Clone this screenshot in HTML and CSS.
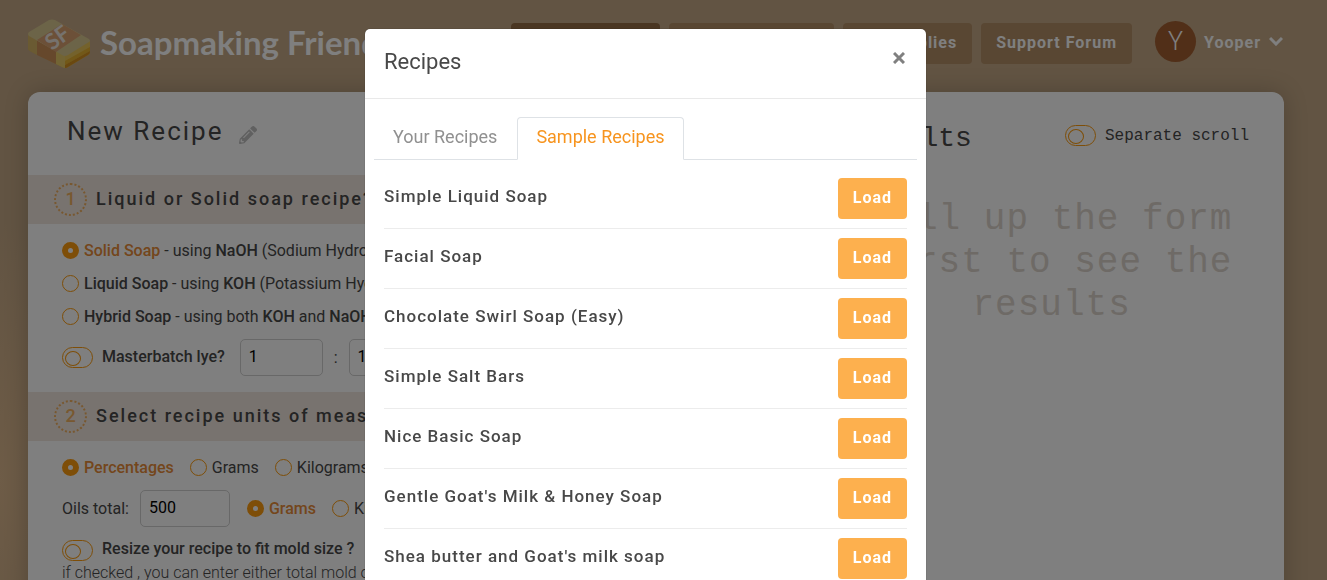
FILE: index.html
```html
<!DOCTYPE html>
<html lang="en">
<head>
    <meta charset="UTF-8">
    <meta name="viewport" content="width=device-width, initial-scale=1.0">
    <title>Soapmaking Friend</title>
    <link rel="stylesheet" href="styles.css">
</head>
<body>
    <header class="site-header">
        <a class="logo" href="#">
            <svg class="logo-icon" width="62" height="50" viewBox="0 0 62 50" aria-hidden="true">
                <path d="M0 14v15q0 2 2 3l32 16q3 2 6 0l20-12q2-1 2-3V22L24 8z" fill="#d8b458"/>
                <path d="M0 14v15q0 2 2 3l7 4V20z" fill="#d4b464"/>
                <path d="M9 21v15l19 9V31z" fill="#cc9058"/>
                <path d="M28 32v13l6 3q2 1 3 1V35z" fill="#e4c868"/>
                <path d="M37 37v12q2 0 3-1l20-12q2-1 2-3V22z" fill="#e8c458"/>
                <path d="M37 42v4l25-14v-4z" fill="#e4b030"/>
                <path d="M37 46v3q2 0 3-1l20-12q2-1 2-3v-1z" fill="#d49020"/>
                <path d="M1 13L21 1q3-1 6 0l34 19q2 2 0 3L40 36q-3 2-6 0L1 17q-2-2 0-4z" fill="#d8c890"/>
                <path d="M9 21L34 5l19 11-25 17z" fill="#d8a070"/>
                <text class="logo-mark" x="0" y="0" transform="translate(24 32) rotate(-36)">SF</text>
            </svg>
            <span class="logo-text">Soapmaking Friend</span>
        </a>
        <nav class="main-nav">
            <a class="nav-link active" href="#">Recipe Builder</a>
            <a class="nav-link" href="#">Recipe Database</a>
            <a class="nav-link" href="#">My Supplies</a>
            <a class="nav-link" href="#">Support Forum</a>
            <a class="user" href="#">
                <span class="avatar">Y</span>
                <span class="user-name">Yooper</span>
                <svg width="14" height="10" viewBox="0 0 14 10" aria-hidden="true"><path d="M1 2l6 6 6-6" fill="none" stroke="currentColor" stroke-width="3"/></svg>
            </a>
        </nav>
    </header>

    <main class="card">
        <form class="recipe-form">
            <div class="recipe-title">
                <h1>New Recipe</h1>
                <svg width="18" height="18" viewBox="0 0 512 512" aria-hidden="true"><path fill="#c0c0c0" d="M498 142l-46 46c-5 5-13 5-17 0L324 77c-5-5-5-12 0-17l46-46c19-19 49-19 68 0l60 60c19 19 19 49 0 68zm-214-42L22 362 0 484c-3 16 12 30 28 28l122-22 262-262c5-5 5-13 0-17L301 100c-4-5-12-5-17 0zM124 340c-5-6-5-14 0-20l154-154c6-5 14-5 20 0s5 14 0 20L144 340c-6 5-14 5-20 0zm-36 84h48v36l-64 12-32-31 12-65h36v48z"/></svg>
            </div>

            <h2 class="step"><span class="step-number">1</span><span>Liquid or Solid soap recipe?</span></h2>
            <div class="step-body">
                <label class="choice checked"><input type="radio" name="soap" checked><span><b>Solid Soap</b><span class="note"> - using <b>NaOH</b> (Sodium Hydroxide)</span></span></label>
                <label class="choice"><input type="radio" name="soap"><span><b>Liquid Soap</b> - using <b>KOH</b> (Potassium Hydroxide)</span></label>
                <label class="choice"><input type="radio" name="soap"><span><b>Hybrid Soap</b> - using both <b>KOH</b> and <b>NaOH</b></span></label>
                <div class="field-row">
                    <label class="toggle"><input type="checkbox"><b>Masterbatch lye?</b></label>
                    <div class="ratio">
                        <input class="text-input" type="text" value="1" aria-label="Water parts">
                        <span>:</span>
                        <input class="text-input" type="text" value="1" aria-label="Lye parts">
                    </div>
                </div>
            </div>

            <h2 class="step"><span class="step-number">2</span><span>Select recipe units of measurement</span></h2>
            <div class="step-body">
                <div class="choices">
                    <label class="choice checked"><input type="radio" name="units" checked><b>Percentages</b></label>
                    <label class="choice"><input type="radio" name="units">Grams</label>
                    <label class="choice"><input type="radio" name="units">Kilograms</label>
                </div>
                <div class="field-row">
                    <label for="oils-total">Oils total:</label>
                    <input class="text-input oils-input" id="oils-total" type="text" value="500">
                    <div class="choices">
                        <label class="choice checked"><input type="radio" name="oils" checked><b>Grams</b></label>
                        <label class="choice"><input type="radio" name="oils">Kilograms</label>
                    </div>
                </div>
                <label class="toggle resize"><input type="checkbox"><b>Resize your recipe to fit mold size ?</b></label>
                <p class="hint">if checked , you can enter either total mold or batch size</p>
            </div>
        </form>

        <section class="results">
            <div class="results-head">
                <h2>Results</h2>
                <label class="toggle"><input type="checkbox">Separate scroll</label>
            </div>
            <p class="results-empty">Fill up the form first to see the results</p>
        </section>
    </main>

    <div class="modal-backdrop">
        <div class="modal" role="dialog" aria-labelledby="modal-title">
            <div class="modal-header">
                <h2 id="modal-title">Recipes</h2>
                <button class="close" type="button" aria-label="Close">
                    <svg width="12" height="12" viewBox="0 0 12 12" aria-hidden="true"><path d="M1 1l10 10M11 1L1 11" stroke="currentColor" stroke-width="3"/></svg>
                </button>
            </div>
            <div class="modal-body">
                <div class="tabs">
                    <a class="tab" href="#">Your Recipes</a>
                    <a class="tab active" href="#">Sample Recipes</a>
                </div>
                <ul class="recipe-list">
                    <li><span>Simple Liquid Soap</span><button class="load" type="button">Load</button></li>
                    <li><span>Facial Soap</span><button class="load" type="button">Load</button></li>
                    <li><span>Chocolate Swirl Soap (Easy)</span><button class="load" type="button">Load</button></li>
                    <li><span>Simple Salt Bars</span><button class="load" type="button">Load</button></li>
                    <li><span>Nice Basic Soap</span><button class="load" type="button">Load</button></li>
                    <li><span>Gentle Goat's Milk &amp; Honey Soap</span><button class="load" type="button">Load</button></li>
                    <li><span>Shea butter and Goat's milk soap</span><button class="load" type="button">Load</button></li>
                </ul>
            </div>
        </div>
    </div>
</body>
</html>
```
FILE: styles.css
```css
* {
    box-sizing: border-box;
}
body {
    margin: 0;
    padding: 0 43px 0 28px;
    height: 100vh;
    overflow: hidden;
    font-family: Roboto, "Liberation Sans", sans-serif;
    font-size: 16px;
    line-height: 24px;
    color: #484848;
    background: radial-gradient(ellipse 90px 260px at 0 480px, #dcb88e, transparent), #c4a886;
}
h1, h2, p, ul {
    margin: 0;
    padding: 0;
}
h1, h2 {
    font-weight: 400;
}
b {
    font-weight: 500;
}
a {
    color: inherit;
    text-decoration: none;
}
button, input {
    font: inherit;
    margin: 0;
}

/* header */
.site-header {
    display: flex;
    justify-content: space-between;
    height: 92px;
    color: #fff;
}
.logo {
    display: flex;
    align-items: center;
    gap: 10px;
    height: 88px;
    white-space: nowrap;
}
.logo-mark {
    font: 700 22px Lato, sans-serif;
    fill: #ece4dc;
}
.logo-text {
    padding-bottom: 4px;
    font-family: Lato, sans-serif;
    font-size: 33px;
    font-weight: 700;
}
.main-nav {
    display: flex;
    align-items: center;
    gap: 9px;
    height: 86px;
    white-space: nowrap;
    font-weight: 700;
    font-size: 16px;
    letter-spacing: 1px;
}
.nav-link {
    padding: 8px 15px 9px;
    border-radius: 4px;
    background: #b28e66;
}
.nav-link.active {
    background: #946c44;
}
.user {
    display: flex;
    align-items: center;
    gap: 8px;
    height: 44px;
    padding: 0 1px 4px 14px;
}
.user-name {
    padding-top: 3px;
}
.avatar {
    width: 41px;
    height: 41px;
    border-radius: 50%;
    background: #a25e30;
    font-size: 25px;
    font-weight: 300;
    line-height: 41px;
    letter-spacing: 0;
    text-align: center;
}

/* recipe card */
.card {
    display: flex;
    min-height: 700px;
    background: #fff;
    border-radius: 12px 12px 0 0;
    box-shadow: 0 0 25px rgba(0, 0, 0, 0.2);
}
.recipe-form {
    flex: 1;
}
.recipe-title {
    display: flex;
    align-items: center;
    gap: 16px;
    height: 83px;
    padding: 0 39px 6px;
}
.recipe-title h1 {
    font-size: 26px;
    letter-spacing: 2px;
}
.recipe-title svg {
    margin-top: 8px;
}
.step {
    display: flex;
    align-items: center;
    gap: 9px;
    height: 49px;
    padding: 0 26px;
    background: #f0e6de;
    font-size: 18px;
    font-weight: 500;
    letter-spacing: 2px;
}
.step > span:last-child {
    padding-bottom: 2px;
}
.step-number {
    width: 33px;
    height: 33px;
    border: 2px dotted #f0b060;
    border-radius: 50%;
    color: #f0b060;
    line-height: 28px;
    letter-spacing: 0;
    text-align: center;
}
.step-body {
    padding: 10px 34px 16px;
}
.choices {
    display: flex;
    gap: 16px;
}
.choice {
    display: flex;
    align-items: center;
    gap: 5px;
    height: 33px;
    white-space: nowrap;
}
.choice.checked {
    color: #e88c38;
}
.choice .note {
    color: #484848;
}
input[type="radio"] {
    appearance: none;
    width: 17px;
    height: 17px;
    border: 1px solid #fc9c10;
    border-radius: 50%;
}
input[type="radio"]:checked {
    border-width: 6px;
}
.field-row {
    display: flex;
    align-items: center;
    gap: 11px;
    margin-top: 6px;
}
.field-row .choices {
    margin-left: 6px;
}
.ratio {
    display: flex;
    align-items: center;
    gap: 11px;
    margin-left: 4px;
}
.text-input {
    width: 83px;
    height: 37px;
    padding: 0 8px 3px;
    border: 1px solid #d0d0d0;
    border-radius: 5px;
    background: #fff;
    color: #000;
}
.oils-input {
    width: 90px;
}
.toggle {
    display: flex;
    align-items: center;
    gap: 9px;
    white-space: nowrap;
}
.toggle b {
    padding-bottom: 2px;
}
.toggle input {
    appearance: none;
    width: 31px;
    height: 21px;
    border: 1px solid #fc9c10;
    border-radius: 11px;
    padding: 3px 2px;
}
.toggle input::before {
    content: "";
    display: block;
    width: 14px;
    height: 13px;
    border: 1px solid #fc9c10;
    border-radius: 50%;
}
.resize {
    margin-top: 10px;
}
.hint {
    line-height: 20px;
    font-weight: 300;
}

/* results column */
.results {
    width: 37%;
    padding: 0 35px;
    font-family: "Liberation Mono", monospace;
}
.results-head {
    display: flex;
    align-items: center;
    justify-content: space-between;
    height: 87px;
}
.results-head h2 {
    padding-top: 6px;
    font-size: 28px;
}
.results-empty {
    margin-top: 19px;
    font-size: 36px;
    line-height: 43px;
    letter-spacing: 1px;
    text-align: center;
    color: #dcd4cc;
}

/* recipes dialog */
.modal-backdrop {
    position: fixed;
    inset: 0;
    padding: 29px 36px 0 0;
    background: rgba(0, 0, 0, 0.5);
    overflow: hidden;
}
.modal {
    max-width: 561px;
    margin: 0 auto;
    background: #fff;
    border-radius: 5px;
    box-shadow: 0 0 1px rgba(0, 0, 0, 0.6);
}
.modal-header {
    display: flex;
    align-items: center;
    justify-content: space-between;
    height: 70px;
    padding: 0 19px 4px;
    border-bottom: 1px solid #e9e9e9;
}
.modal-header h2 {
    font-size: 22px;
}
.close {
    display: flex;
    padding: 2px;
    margin-bottom: 8px;
    border: 0;
    background: none;
    color: #808080;
}
.modal-body {
    padding: 18px 9px;
}
.tabs {
    display: flex;
    gap: 1px;
    border-bottom: 1px solid #dee2e6;
    font-size: 18px;
}
.tab {
    margin-bottom: -1px;
    padding: 7px 18px 10px;
    border: 1px solid transparent;
    border-radius: 4px 4px 0 0;
    color: #909090;
}
.tab.active {
    border-color: #dee2e6;
    border-bottom-color: #fff;
    color: #f7941e;
}
.recipe-list {
    list-style: none;
    padding: 9px 10px;
}
.recipe-list li {
    display: flex;
    align-items: center;
    justify-content: space-between;
    height: 60px;
    border-bottom: 1px solid #ececec;
    font-size: 17px;
    font-weight: 500;
    letter-spacing: 1px;
}
.recipe-list span {
    padding-bottom: 5px;
}
.load {
    padding: 8px 15px 9px;
    border: 0;
    border-radius: 4px;
    background: #fdb04e;
    color: #fff;
    font-size: 16px;
    font-weight: 700;
    letter-spacing: 1px;
}
```
